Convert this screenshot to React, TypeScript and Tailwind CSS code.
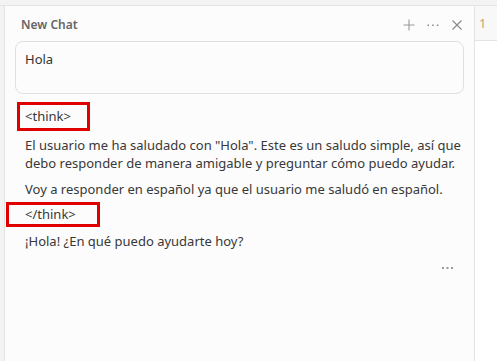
import React from "react";

export default function App() {
  const font = { fontFamily: '"Segoe UI", "Noto Sans", "Open Sans", sans-serif' };
  return (
    <div className="w-[497px] h-[361px] bg-[#f3f3f3] flex flex-col overflow-hidden" style={font}>
      <div className="h-[6px] border-b border-[#e5e5e5] shrink-0" />
      <div className="flex flex-1 min-h-0">
        <div className="w-[4px] shrink-0" />
        <div className="w-[471px] bg-[#fcfcfc] border-l border-r border-[#e3e3e3] flex flex-col">
          <div className="h-[35px] flex items-center justify-between pl-[16px] pr-[10px] pt-[2px]">
            <span className="text-[12px] font-semibold text-[#666]">New Chat</span>
            <div className="flex items-center gap-[10px]">
              <svg width="14" height="14" viewBox="0 0 14 14" fill="none" stroke="#999" strokeWidth="1.1">
                <path d="M7 1.5v11M1.5 7h11" />
              </svg>
              <svg width="14" height="14" viewBox="0 0 14 14" fill="#888">
                <rect x="1.5" y="6.5" width="1.5" height="1.5" />
                <rect x="6.2" y="6.5" width="1.5" height="1.5" />
                <rect x="10.9" y="6.5" width="1.5" height="1.5" />
              </svg>
              <svg width="14" height="14" viewBox="0 0 14 14" fill="none" stroke="#888" strokeWidth="1.1">
                <path d="M2.5 2.5l9 9M11.5 2.5l-9 9" />
              </svg>
            </div>
          </div>
          <div className="mx-[10px] h-[53px] rounded-[8px] border border-[#e0e0e0] bg-[#fcfcfc] px-[9px] pt-[8px] text-[13px] text-[#333]">
            Hola
          </div>
          <div className="pl-[20px] pr-[10px] pt-[8px] text-[13px] text-[#383838] leading-[18px]">
            <div className="relative h-[28px] flex items-center">
              <span>&lt;think&gt;</span>
              <div className="absolute left-[-8px] top-0 w-[73px] h-[29px] border-[3px] border-[#e00000]" />
            </div>
            <p className="mt-[6px]">
              El usuario me ha saludado con "Hola". Este es un saludo simple, así que debo responder de manera amigable y preguntar cómo puedo ayudar.
            </p>
            <p className="mt-[8px]">Voy a responder en español ya que el usuario me saludó en español.</p>
            <div className="relative h-[24px] mt-[4px] flex items-center">
              <span>&lt;/think&gt;</span>
              <div className="absolute left-[-19px] top-0 w-[94px] h-[25px] border-[3px] border-[#e00000]" />
            </div>
            <p className="mt-[6px]">¡Hola! ¿En qué puedo ayudarte hoy?</p>
            <div className="flex justify-end pr-[10px] mt-[16px]">
              <svg width="12" height="4" viewBox="0 0 12 4" fill="#999">
                <rect x="0" y="1" width="2" height="2" />
                <rect x="4.5" y="1" width="2" height="2" />
                <rect x="9" y="1" width="2" height="2" />
              </svg>
            </div>
          </div>
        </div>
        <div className="flex-1 flex flex-col bg-white">
          <div className="h-[35px] bg-[#f8f8f8] border-b border-[#e3e3e3] flex items-center pl-[4px] pt-[2px] text-[13px] text-[#c8a070]">
            1
          </div>
          <div className="flex-1 bg-white" />
        </div>
      </div>
    </div>
  );
}
